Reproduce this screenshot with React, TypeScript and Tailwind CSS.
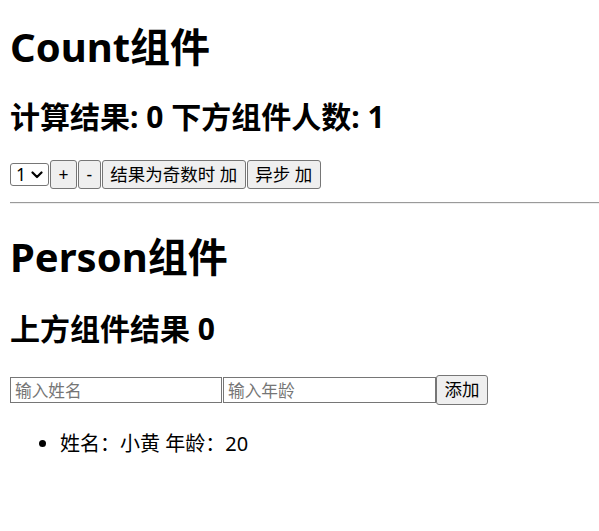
import { useState } from "react";

type Person = { id: string; name: string; age: number };

const font = "font-['Noto_Sans','Noto_Sans_CJK_SC',sans-serif]";
const btn =
  "h-[29px] px-[7.5px] border border-[#767676] rounded-[3px] bg-[#efefef] text-[17.5px] leading-none text-black";

export default function App() {
  const [count, setCount] = useState(0);
  const [step, setStep] = useState(1);
  const [persons, setPersons] = useState<Person[]>([{ id: "1", name: "小黄", age: 20 }]);
  const [name, setName] = useState("");
  const [age, setAge] = useState("");

  // 添加人员
  const addPerson = () => {
    if (!name.trim() || !age.trim()) return;
    setPersons([{ id: String(Date.now()), name, age: Number(age) }, ...persons]);
    setName("");
    setAge("");
  };

  return (
    <div className={`${font} pl-[10px] pt-[27px] text-black bg-white min-h-[531px]`}>
      {/* Count 组件 */}
      <h1 className="text-[40px] leading-[40px] font-bold">Count组件</h1>
      <h2 className="mt-[35px] text-[30px] leading-[30px] font-bold">
        计算结果: {count} 下方组件人数: {persons.length}
      </h2>
      <div className="mt-[28px] flex items-center gap-px">
        <div className="relative w-[39px] h-[23px]">
          <select
            value={step}
            onChange={(e) => setStep(Number(e.target.value))}
            className="appearance-none w-full h-full border border-[#767676] rounded-[3px] bg-white text-[17.5px] leading-none pl-[5px]"
          >
            <option value={1}>1</option>
            <option value={2}>2</option>
            <option value={3}>3</option>
          </select>
          <svg
            className="pointer-events-none absolute right-[6px] top-[8px]"
            width="12"
            height="8"
            viewBox="0 0 12 8"
            fill="none"
          >
            <path d="M1.5 1.5 6 6l4.5-4.5" stroke="#000" strokeWidth="2.2" strokeLinecap="round" strokeLinejoin="round" />
          </svg>
        </div>
        <button type="button" className={btn} onClick={() => setCount(count + step)}>
          +
        </button>
        <button type="button" className={btn} onClick={() => setCount(count - step)}>
          -
        </button>
        <button
          type="button"
          className={btn}
          onClick={() => count % 2 !== 0 && setCount(count + step)}
        >
          结果为奇数时 加
        </button>
        <button
          type="button"
          className={btn}
          onClick={() => setTimeout(() => setCount((c) => c + step), 500)}
        >
          异步 加
        </button>
      </div>
      <hr className="mt-[13px] border-0 border-t border-t-[#9a9a9a] border-b border-b-[#eeeeee]" />

      {/* Person 组件 */}
      <h1 className="mt-[33px] text-[40px] leading-[40px] font-bold">Person组件</h1>
      <h2 className="mt-[37px] text-[30px] leading-[30px] font-bold">上方组件结果 {count}</h2>
      <div className="mt-[31px] flex items-center">
        <input
          value={name}
          onChange={(e) => setName(e.target.value)}
          placeholder="输入姓名"
          className="w-[212px] h-[26px] border border-[#767676] px-[4px] text-[16.67px] placeholder:text-[#757575]"
        />
        <input
          value={age}
          onChange={(e) => setAge(e.target.value)}
          placeholder="输入年龄"
          className="ml-px w-[213px] h-[26px] border border-[#767676] px-[4px] text-[16.67px] placeholder:text-[#757575]"
        />
        <button type="button" onClick={addPerson} className={`${btn} h-[30px]`}>
          添加
        </button>
      </div>
      <ul className="mt-[27px] pl-[50px] list-disc text-[20px] leading-[24px]">
        {persons.map((p) => (
          <li key={p.id}>
            姓名：{p.name} 年龄：{p.age}
          </li>
        ))}
      </ul>
    </div>
  );
}
